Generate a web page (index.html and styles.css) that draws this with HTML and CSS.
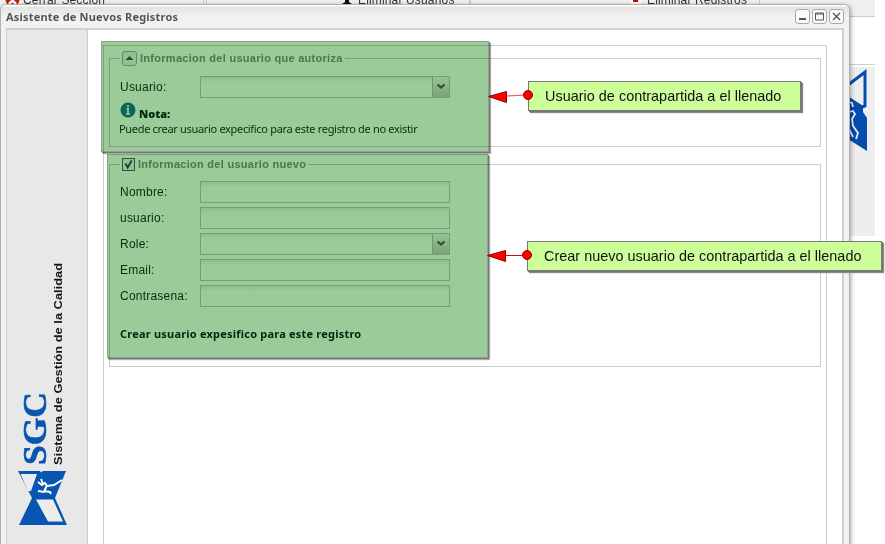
FILE: index.html
```html
<!DOCTYPE html>
<html lang="es">
<head>
<meta charset="utf-8">
<title>Asistente de Nuevos Registros</title>
<link rel="stylesheet" href="styles.css">
</head>
<body>
<div class="stage">
  <div class="backdrop">
    <div class="toolbar">
      <div class="tool tool-close"><svg width="15" height="15" viewBox="0 0 15 15"><circle cx="7.500" cy="7.500" r="7" fill="#c31b05"/><path d="M4 5l7 7M11 5l-7 7" stroke="#fff" stroke-width="2.500"/></svg><span>Cerrar Seccion</span></div>
      <div class="tool tool-users"><svg width="14" height="14" viewBox="0 0 14 14"><circle cx="7" cy="5" r="3" fill="#111"/><path d="M5 6h4v4l3 2v2H2v-2l3-2z" fill="#111"/></svg><span>Eliminar Usuarios</span></div>
      <div class="tool tool-records"><svg width="11" height="14" viewBox="0 0 11 14"><path d="M0 0h11v14H0z" fill="#fff"/><path d="M3 8h5v2H3z" fill="#c00"/></svg><span>Eliminar Registros</span></div>
    </div>
    <div class="banner">
      <svg width="30" height="90" viewBox="845 67 30 90"><path d="M848 84l17-13v34l-3 1-14-9" fill="none" stroke="#044cae" stroke-width="3"/><path fill="#044cae" d="M848 97l15 8v6l4 6v33l-19-12z"/><path d="M849 101l3 1 1 4M849 111l4-1 2 3-3 5 1 7 5 7-2 6M849 128l4 8" fill="none" stroke="#eee" stroke-width="1.800"/></svg>
    </div>
  </div>

  <div class="window">
    <div class="titlebar">
      <span class="title">Asistente de Nuevos Registros</span>
      <div class="controls">
        <svg width="15" height="15" viewBox="0 0 15 15"><rect class="ctl" x=".5" y=".5" width="14" height="14" rx="2.500"/><path d="M4 10h7" stroke="#555" stroke-width="2"/></svg>
        <svg width="15" height="15" viewBox="0 0 15 15"><rect class="ctl" x=".5" y=".5" width="14" height="14" rx="2.500"/><path d="M3.500 4h8v7h-8zM3 5h9" fill="none" stroke="#555"/></svg>
        <svg width="15" height="15" viewBox="0 0 15 15"><rect class="ctl" x=".5" y=".5" width="14" height="14" rx="2.500"/><path d="M4 4l7 7M11 4l-7 7" stroke="#555" stroke-width="1.400"/></svg>
      </div>
    </div>
    <div class="body">
      <div class="sidebar">
        <svg width="80" height="290" viewBox="7 254 80 290">
          <text class="slogan" transform="translate(61.500 465) rotate(-90)" textLength="202" lengthAdjust="spacingAndGlyphs">Sistema de Gestión de la Calidad</text>
          <text class="brand" transform="translate(46 465) rotate(-90)" textLength="73" lengthAdjust="spacingAndGlyphs">SGC</text>
          <path fill="#0756b1" d="M18 471h22l1 1.500 2-1.500h23l-11 27 12 27H19l13-27z"/>
          <path fill="#ececec" d="M20.500 474H37l-6 17h-3zM36 499.500h17l10 22H48z"/>
          <path fill="none" stroke="#fff" stroke-width="2" d="M38 482l4 3 3-2 2 3 7-1 8-5M47 485l-3 7-6-1M44 491l6 1 1 2M41 479l2 5"/>
        </svg>
      </div>
      <div class="content">
        <div class="form-panel">
          <section class="group group-auth">
            <h2 class="legend"><svg width="15" height="15" viewBox="0 0 15 15"><rect x=".5" y=".5" width="14" height="14" rx="2.500" fill="#f2f2f2" stroke="#aaa"/><path d="M3.500 9h8l-4-4z" fill="#465f46"/></svg><span>Informacion del usuario que autoriza</span></h2>
            <div class="row"><label>Usuario:</label><div class="input combo"><i><svg width="16" height="20" viewBox="0 0 16 20"><path d="M4.500 7.500L8 10.500l3.500-3" fill="none" stroke="#426b42" stroke-width="2.200"/></svg></i></div></div>
            <div class="note-head"><svg width="16" height="16" viewBox="0 0 16 16"><circle cx="8" cy="8" r="7.500" fill="#0f7d99"/><path d="M8 3v2.200M6.500 7H8v5M6 12h4" fill="none" stroke="#d5eeee" stroke-width="2"/></svg><b>Nota:</b></div>
            <p class="note">Puede crear usuario expecifico para este registro de no existir</p>
          </section>
          <section class="group group-new">
            <h2 class="legend"><svg width="13" height="13" viewBox="0 0 13 13"><rect x=".5" y=".5" width="12" height="12" fill="#f3f3f3" stroke="#456b65"/><path d="M3.500 5.500l2.200 4 4-7" fill="none" stroke="#29566f" stroke-width="2"/></svg><span>Informacion del usuario nuevo</span></h2>
            <div class="row"><label>Nombre:</label><div class="input"></div></div>
            <div class="row"><label>usuario:</label><div class="input"></div></div>
            <div class="row"><label>Role:</label><div class="input combo"><i><svg width="16" height="20" viewBox="0 0 16 20"><path d="M4.500 7.500L8 10.500l3.500-3" fill="none" stroke="#426b42" stroke-width="2.200"/></svg></i></div></div>
            <div class="row"><label>Email:</label><div class="input"></div></div>
            <div class="row"><label>Contrasena:</label><div class="input"></div></div>
            <p class="hint">Crear usuario expesifico para este registro</p>
          </section>
        </div>
      </div>
    </div>
  </div>

  <div class="highlight highlight-auth"></div>
  <div class="highlight highlight-new"></div>
  <div class="callout callout-auth">Usuario de contrapartida a el llenado</div>
  <div class="callout callout-new">Crear nuevo usuario de contrapartida a el llenado</div>
  <svg class="arrows" width="885" height="544" viewBox="0 0 885 544">
    <path d="M506 96l22-1" stroke="#f55" stroke-width="1.200"/>
    <path d="M505 255.500h22" stroke="#e00"/>
    <g fill="#f00" stroke="#8c0000"><path d="M488.500 96.500l18-5v11z"/><path d="M487.500 255.500l18-5v11z"/><circle cx="528" cy="95" r="4.500"/><circle cx="527" cy="255" r="4.500"/></g>
  </svg>
</div>
</body>
</html>
```
FILE: styles.css
```css
* { box-sizing: border-box; }
body { margin: 0; background: #fff; font-family: "Liberation Sans", Arial, sans-serif; }
svg { display: block; flex: none; }
.stage { position: relative; width: 885px; height: 544px; overflow: hidden; }

.backdrop { width: 875px; }
.toolbar { display: flex; height: 17px; background: #f0f0f0; border-bottom: 1px solid #ccc; }
.tool { display: flex; height: 16px; border-right: 1px solid #ccc; font-size: 12px; letter-spacing: .15px; line-height: 14px; color: #333; white-space: nowrap; }
.tool svg { margin-top: -8px; }
.tool span { margin-top: -7px; }
.tool-close { width: 204px; padding-left: 5px; gap: 3px; }
.tool-users { width: 264px; margin-left: 2px; padding-left: 133px; gap: 4px; border-left: 1px solid #ccc; }
.tool-records { width: 290px; padding-left: 159px; gap: 6px; border-left: 1px solid #ccc; }
.banner { display: flex; justify-content: flex-end; height: 172px; margin-top: 47px; padding-top: 3px; border-top: 1px solid #ccc; background: linear-gradient(#fff 2px, #eee 2px); }

.window { position: absolute; left: 0; top: 4px; width: 850px; height: 560px; padding: 0 6px; background: #f2f2f2; border: 1px solid #b0b0b0; border-radius: 6px 6px 0 0; box-shadow: 1px 1px 4px rgba(0,0,0,.35); }
.titlebar { display: flex; justify-content: space-between; height: 23px; margin: 0 -6px; padding: 0 5px; background: linear-gradient(#fff 1px, #e2e2e2 2px, #f2f2f2 12px); border-radius: 5px 5px 0 0; }
.title { font: bold 11px/24px "Noto Sans", sans-serif; letter-spacing: .2px; color: #555; }
.controls { display: flex; gap: 2px; padding-top: 4px; }
.ctl { fill: #fafafa; stroke: #aaa; }
.body { display: flex; height: 540px; margin-left: -1px; margin-right: -1px; border: 2px solid #d0d0d0; border-left-width: 1px; }
.sidebar { width: 81px; padding-top: 224px; background: #e8e8e8; border-right: 1px solid #ccc; }
.slogan { font: bold 11px "Liberation Sans", sans-serif; fill: #15151f; }
.brand { font: bold 33px "Liberation Serif", serif; fill: #0756b1; stroke: #0756b1; stroke-width: .6px; }
.content { flex: 1; padding: 15px 15px 0; background: #fff; }
.form-panel { height: 530px; padding: 12px 5px 0; border: 1px solid #ccc; }
.group { position: relative; border: 1px solid #ccc; padding-left: 10px; }
.group-auth { height: 89px; padding-top: 17px; }
.group-new { height: 203px; margin-top: 17px; padding-top: 16px; }
.legend { position: absolute; left: 10px; top: -8px; display: flex; align-items: center; gap: 3px; margin: 0; padding: 0 2px; background: #fff; font-size: 11px; line-height: 15px; letter-spacing: .28px; color: #789878; white-space: nowrap; }
.row { display: flex; height: 22px; margin-bottom: 4px; }
.row label { width: 80px; font-size: 12px; line-height: 22px; letter-spacing: .22px; color: #043c10; }
.input { width: 250px; border: 1px solid #c4c4c4; background: linear-gradient(#ececec, #fff 5px); }
.combo { display: flex; justify-content: flex-end; }
.combo i { width: 17px; border-left: 1px solid #bbb; background: linear-gradient(#f5f5f5, #ccc); }
.note-head { display: flex; gap: 3px; height: 17px; font: bold 11px/24px "Noto Sans", sans-serif; color: #043010; }
.note { margin: 3px 0 0 -1px; font: 11px/14px "Noto Sans", sans-serif; letter-spacing: -.32px; color: #043c10; white-space: nowrap; }
.hint { margin: 19px 0 0; font: bold 11px/16px "Noto Sans", sans-serif; letter-spacing: .21px; color: #043010; }

.highlight { position: absolute; mix-blend-mode: multiply; background: #9c9; border: 1px solid #91a091; box-shadow: 1px 1px 0 #777, 2px 2px 1px #aaa; }
.highlight-auth { left: 101px; top: 41px; width: 388px; height: 111px; }
.highlight-new { left: 107px; top: 154px; width: 381px; height: 204px; }
.callout { position: absolute; height: 30px; padding-left: 16px; border: 1px solid #777; background: #cf9; box-shadow: 1px 1px 0 #777, 2px 2px 1px #888; font-size: 14.4px; letter-spacing: .03px; line-height: 28px; color: #111; white-space: nowrap; }
.callout-auth { left: 528px; top: 81px; width: 273px; }
.callout-new { left: 527px; top: 241px; width: 355px; }
.arrows { position: absolute; left: 0; top: 0; }
```
